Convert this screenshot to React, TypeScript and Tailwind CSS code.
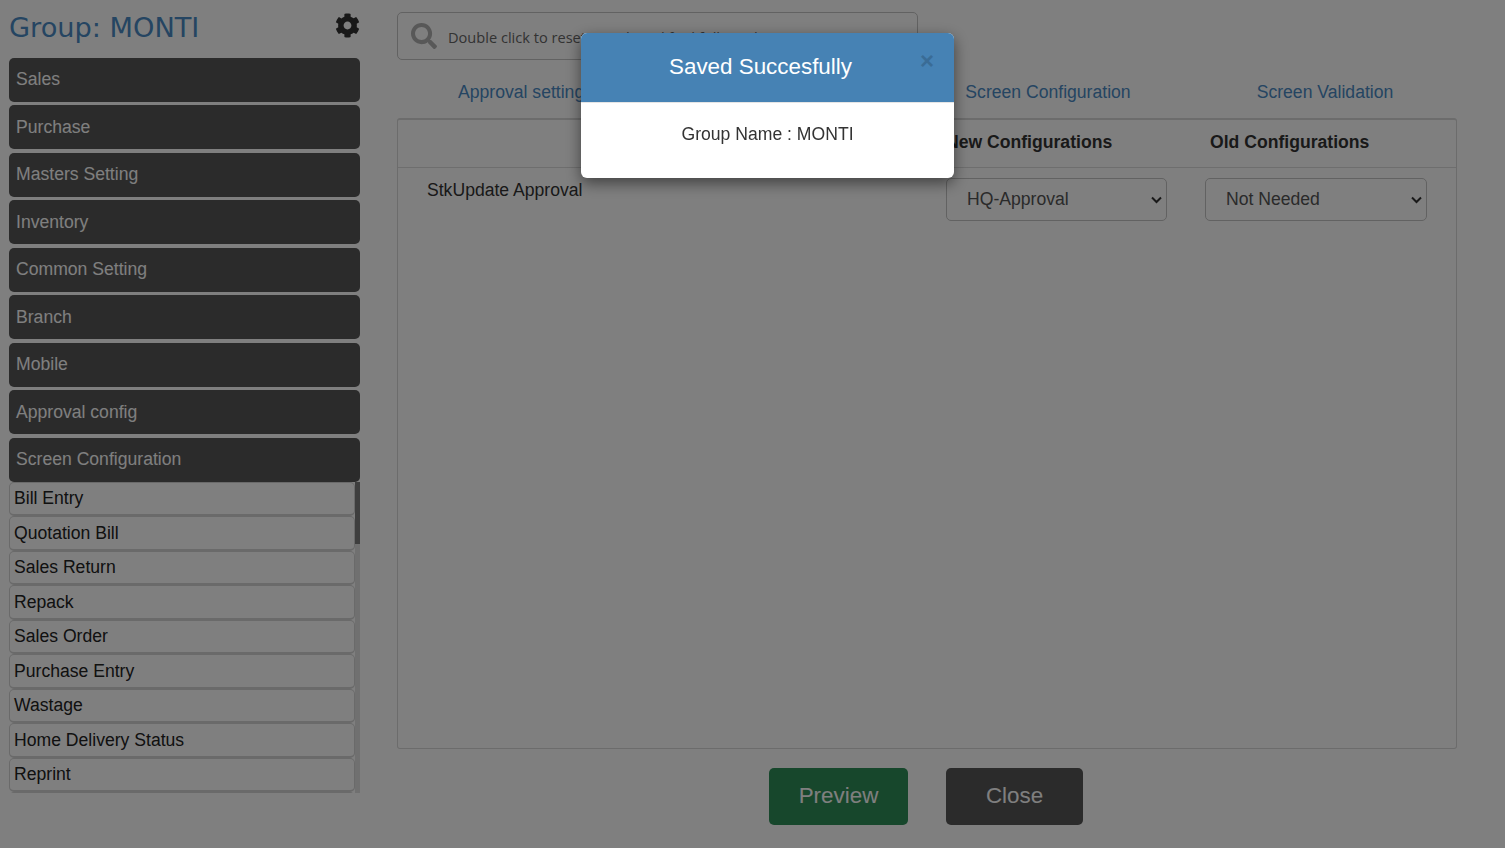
import React from 'react'
import { FaCog, FaSearch } from 'react-icons/fa'

const menus = [
    "Sales",
    "Purchase",
    "Masters Setting",
    "Inventory",
    "Common Setting",
    "Branch",
    "Mobile",
    "Approval config",
    "Screen Configuration",
]

const screens = [
    "Bill Entry",
    "Quotation Bill",
    "Sales Return",
    "Repack",
    "Sales Order",
    "Purchase Entry",
    "Wastage",
    "Home Delivery Status",
    "Reprint",
    "",
]

const Sidebar = () => {
    return (
        <aside className="ml-[9px] w-[351px] shrink-0">
            <div className="flex h-[57.9px] items-start justify-between">
                <h1 className="mt-[9px] font-['DejaVu_Sans'] text-[27.2px] leading-[38px] text-[#4a8ac4]">Group: MONTI</h1>
                <FaCog className="mt-[13px] text-[25px] text-[#333333]" />
            </div>
            <div className="flex flex-col gap-[3.5px]">
                {menus.map((name) => (
                    <div key={name} className="flex h-[44px] items-center rounded-[5px] bg-[#565656] pb-[1px] pl-[7px] text-[17.6px] text-white">
                        {name}
                    </div>
                ))}
            </div>
            <div className="flex h-[311px] overflow-hidden">
                <div className="w-[346px] shrink-0">
                    {screens.map((name, i) => (
                        <div key={i} className="box-border flex h-[34.5px] items-center rounded-[5px] border border-b-2 border-[#d4d4d4] pl-[4px] text-[17.6px] text-[#222222]">
                            {name}
                        </div>
                    ))}
                </div>
                <div className="w-[5px] bg-[#e0e0e0]">
                    <div className="h-[62px] bg-[#7d7d7d]"></div>
                </div>
            </div>
        </aside>
    )
}

const ConfigSelect = ({ value, width }: { value: string, width: string }) => {
    return (
        <div className={`relative h-[43px] ${width}`}>
            <select defaultValue={value} className="h-full w-full appearance-none rounded-[5px] border border-[#c4c4c4] bg-white pl-[20px] text-[17.6px] text-[#555555]">
                <option>{value}</option>
            </select>
            <svg className="pointer-events-none absolute right-[5px] top-[18px]" width="11" height="8" viewBox="0 0 11 8" fill="none">
                <path d="M1 1.5 L5.5 6 L10 1.5" stroke="#333333" strokeWidth="2" />
            </svg>
        </div>
    )
}

const Main = () => {
    return (
        <main className="ml-[37px] flex w-[1060px] shrink-0 flex-col">
            <div className="mt-[12px] flex h-[48px] w-[521px] items-center rounded-[5px] border border-[#c4c4c4] pl-[13px]">
                <FaSearch className="text-[26px] text-[#b0b0b0]" />
                <span className="ml-[11px] pt-[3px] font-['Open_Sans'] text-[14.6px] text-[#666666]">Double click to reset search and find full result</span>
            </div>
            <div className="flex h-[58px] items-center pt-[7px] text-[17.6px] text-[#4a8ac4]">
                <div className="w-[257px] text-center">Approval settings</div>
                <div className="w-[249px]"></div>
                <div className="w-[290px] text-center">Screen Configuration</div>
                <div className="w-[264px] text-center">Screen Validation</div>
            </div>
            <section className="h-[631px] rounded-[3px] border border-t-2 border-[#d8d8d8]">
                <div className="flex h-[48px] items-center border-b border-[#dddddd] pb-[2px] text-[17.6px] font-bold text-[#333333]">
                    <div className="ml-[548px] w-[264px]">New Configurations</div>
                    <div>Old Configurations</div>
                </div>
                <div className="flex pt-[10px]">
                    <div className="ml-[29px] w-[519px] text-[17.6px] leading-[24px] text-[#333333]">StkUpdate Approval</div>
                    <ConfigSelect value="HQ-Approval" width="w-[221px]" />
                    <div className="w-[38px]"></div>
                    <ConfigSelect value="Not Needed" width="w-[222px]" />
                </div>
            </section>
            <div className="mt-[19px] flex h-[57px] text-[22.4px] text-white">
                <button className="ml-[372px] w-[139px] rounded-[5px] bg-[#2e8e58] pb-[2px]">Preview</button>
                <button className="ml-[38px] w-[137px] rounded-[5px] bg-[#565656] pb-[2px]">Close</button>
            </div>
        </main>
    )
}

const SavedModal = () => {
    return (
        <div className="fixed inset-0 bg-black/50">
            <div className="absolute left-[581px] top-[33px] h-[145px] w-[373px] overflow-hidden rounded-[6px] bg-white shadow-[0_5px_15px_rgba(0,0,0,0.5)]">
                <div className="relative flex h-[70px] items-center justify-center border-b border-[#e5e5e5] bg-[#4682b4] pb-[2px] pr-[14px] text-[22.4px] text-white">
                    Saved Succesfully
                    <span className="absolute right-[20px] top-[13px] text-[24px] font-bold leading-[30px] text-[#3a6c96]">×</span>
                </div>
                <div className="pt-[18px] text-center text-[17.6px] leading-[26px] text-[#333333]">Group Name : MONTI</div>
            </div>
        </div>
    )
}

const App = () => {
    return (
        <div className="flex h-[848px] w-[1505px] overflow-hidden bg-white font-['Liberation_Sans',sans-serif]">
            <Sidebar />
            <Main />
            <SavedModal />
        </div>
    )
}

export default App
